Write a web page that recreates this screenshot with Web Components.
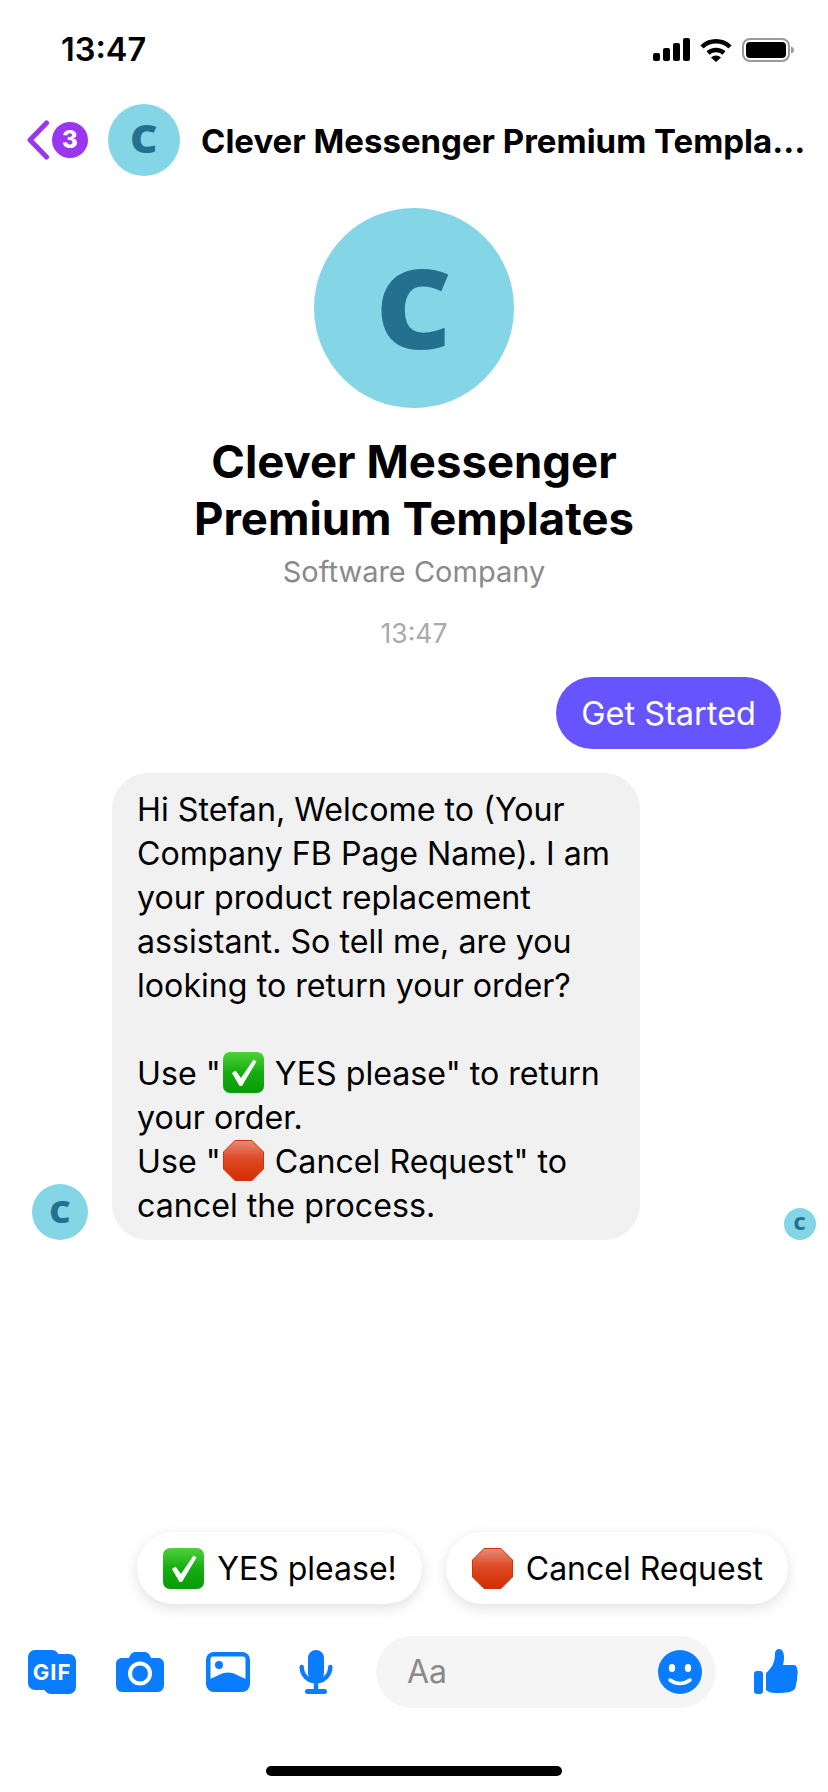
<!DOCTYPE html>
<html lang="en">
<head>
<meta charset="utf-8">
<title>Clever Messenger</title>
<style>
  html, body { margin: 0; background: #fff; }
  body { font-family: Inter, "Liberation Sans", sans-serif; color: #000; }
</style>
</head>
<body>
<chat-screen>
  <status-bar slot="status" time="13:47"></status-bar>
  <chat-header slot="header" badge="3">Clever Messenger Premium Templates</chat-header>
  <profile-intro slot="intro" category="Software Company" stamp="13:47">Clever Messenger<br>Premium Templates</profile-intro>
  <sent-bubble slot="thread">Get Started</sent-bubble>
  <received-bubble slot="thread">Hi Stefan, Welcome to (Your<br>Company FB Page Name). I am<br>your product replacement<br>assistant. So tell me, are you<br>looking to return your order?<br><br>Use "<emoji-icon kind="check"></emoji-icon> YES please" to return<br>your order.<br>Use "<emoji-icon kind="stop"></emoji-icon> Cancel Request" to<br>cancel the process.</received-bubble>
  <quick-chip slot="chips" kind="check">YES please!</quick-chip>
  <quick-chip slot="chips" kind="stop">Cancel Request</quick-chip>
  <composer-bar slot="composer"></composer-bar>
</chat-screen>

<script>
// Avatar azul con la C, el tamano llega por atributo
class CAvatar extends HTMLElement {
  connectedCallback() {
    const size = Number(this.getAttribute('size')) || 72;
    this.attachShadow({ mode: 'open' }).innerHTML = `
      <style>
        :host { display: flex; flex: none; width: ${size}px; height: ${size}px; border-radius: 50%;
          background: #84d5e5; color: #23708f; align-items: center; justify-content: center;
          font: 800 ${size * 0.55}px/1 "Open Sans", sans-serif; }
        span { display: block; margin-bottom: ${size * 0.025}px; transform: scaleX(1.07); }
      </style><span>C</span>`;
  }
}
customElements.define('c-avatar', CAvatar);

class EmojiIcon extends HTMLElement {
  connectedCallback() {
    const check = `
      <defs><linearGradient id="g" x1="0" y1="0" x2="0" y2="1">
        <stop offset="0" stop-color="#4fd03a"/><stop offset=".5" stop-color="#14ae0f"/><stop offset="1" stop-color="#0a9a08"/>
      </linearGradient></defs>
      <rect x="0" y="0" width="41" height="41" rx="7" fill="url(#g)"/>
      <path d="M9 21 L12.500 18.500 L18 26 L30.500 7.500 L33.500 9.500 L19 34 H16.500 Z" fill="#fff"/>`;
    const stop = `
      <defs><linearGradient id="g" x1="0" y1="0" x2="0" y2="1">
        <stop offset="0" stop-color="#e88a78"/><stop offset=".45" stop-color="#dd4a24"/><stop offset="1" stop-color="#d42c00"/>
      </linearGradient></defs>
      <path d="M12 .5 H29 L40.500 12 V29 L29 40.500 H12 L.5 29 V12 Z" fill="url(#g)" stroke="#d13208"/>`;
    this.attachShadow({ mode: 'open' }).innerHTML = `
      <style>
        :host { display: inline-block; width: 41px; height: 41px; margin: 0 2px; vertical-align: -8px; }
        svg { display: block; }
      </style>
      <svg width="41" height="41" viewBox="0 0 41 41">${this.getAttribute('kind') === 'stop' ? stop : check}</svg>`;
  }
}
customElements.define('emoji-icon', EmojiIcon);

class StatusBar extends HTMLElement {
  connectedCallback() {
    this.attachShadow({ mode: 'open' }).innerHTML = `
      <style>
        :host { display: flex; align-items: center; height: 100px; box-sizing: border-box;
          padding: 0 34px 0 61px; justify-content: space-between; }
        .time { font: 600 32.5px/36px Inter, sans-serif; margin-top: -1px; }
        .icons { display: flex; align-items: center; gap: 10px; }
        svg { display: block; }
      </style>
      <span class="time">${this.getAttribute('time')}</span>
      <span class="icons">
        <svg width="37" height="24" viewBox="0 0 37 24" fill="#000">
          <rect x="0" y="15" width="7" height="8" rx="2"/>
          <rect x="10" y="10" width="7" height="13" rx="2"/>
          <rect x="20" y="5" width="7" height="18" rx="2"/>
          <rect x="30" y="0" width="7" height="23" rx="2"/>
        </svg>
        <svg width="32" height="24" viewBox="0 0 32 24">
          <path d="M2 9 A20 20 0 0 1 30 9" fill="none" stroke="#000" stroke-width="4.500"/>
          <path d="M8 15 A12 12 0 0 1 24 15" fill="none" stroke="#000" stroke-width="4.500"/>
          <path d="M16 24 L11 19.500 A7.500 7.500 0 0 1 21 19.500 Z" fill="#000"/>
        </svg>
        <svg width="52" height="24" viewBox="0 0 52 24">
          <rect x="1" y="1" width="46" height="22" rx="7" fill="none" stroke="#9a9a9a" stroke-width="2"/>
          <rect x="4" y="4" width="40" height="16" rx="4" fill="#000"/>
          <path d="M49 8.500 C51 9 52 10.500 52 12 C52 13.500 51 15 49 15.500 Z" fill="#9a9a9a"/>
        </svg>
      </span>`;
  }
}
customElements.define('status-bar', StatusBar);

class ChatHeader extends HTMLElement {
  connectedCallback() {
    this.attachShadow({ mode: 'open' }).innerHTML = `
      <style>
        :host { display: flex; align-items: center; height: 80px; padding: 0 20px 0 27px; }
        svg { display: block; flex: none; }
        .badge { flex: none; width: 36px; height: 36px; margin: 0 20px 0 3px; border-radius: 50%;
          background: #9b36f0; color: #fff; display: flex; align-items: center; justify-content: center;
          font: 800 24px/1 Inter, sans-serif; }
        .title { flex: 1; min-width: 0; margin: 1px 0 0 21px; font: 700 33px/40px Inter, sans-serif;
          white-space: nowrap; overflow: hidden; text-overflow: ellipsis; }
      </style>
      <svg width="22" height="40" viewBox="0 0 22 40">
        <path d="M19.500 3 L3 20 L19.500 37" fill="none" stroke="#9b36f0" stroke-width="5" stroke-linecap="round" stroke-linejoin="round"/>
      </svg>
      <span class="badge">${this.getAttribute('badge')}</span>
      <c-avatar size="72"></c-avatar>
      <span class="title"><slot></slot></span>`;
  }
}
customElements.define('chat-header', ChatHeader);

class ProfileIntro extends HTMLElement {
  connectedCallback() {
    this.attachShadow({ mode: 'open' }).innerHTML = `
      <style>
        :host { display: flex; flex-direction: column; align-items: center; padding-top: 28px; text-align: center; }
        .name { margin-top: 25px; font: 700 45.500px/57px Inter, sans-serif; }
        .category { margin-top: 8px; font: 400 29px/34px Inter, sans-serif; color: #8a8a8e; }
        .stamp { margin-top: 29px; font: 400 26.500px/30px Inter, sans-serif; color: #a9a9ab; }
      </style>
      <c-avatar size="200"></c-avatar>
      <div class="name"><slot></slot></div>
      <div class="category">${this.getAttribute('category')}</div>
      <div class="stamp">${this.getAttribute('stamp')}</div>`;
  }
}
customElements.define('profile-intro', ProfileIntro);

class SentBubble extends HTMLElement {
  connectedCallback() {
    this.attachShadow({ mode: 'open' }).innerHTML = `
      <style>
        :host { display: flex; justify-content: flex-end; padding: 29px 47px 0 0; }
        .bubble { height: 72px; box-sizing: border-box; padding: 2px 25px 0; border-radius: 36px; background: #6655ff; color: #fff;
          display: flex; align-items: center; font: 400 32.500px/44px Inter, sans-serif; }
      </style>
      <div class="bubble"><slot></slot></div>`;
  }
}
customElements.define('sent-bubble', SentBubble);

class ReceivedBubble extends HTMLElement {
  connectedCallback() {
    this.attachShadow({ mode: 'open' }).innerHTML = `
      <style>
        :host { display: flex; align-items: flex-end; justify-content: space-between; padding: 24px 12px 0 32px; }
        .left { display: flex; align-items: flex-end; gap: 24px; }
        .bubble { width: 528px; box-sizing: border-box; padding: 15px 25px 12px; border-radius: 36px;
          background: #f1f1f1; font: 400 32.200px/44px Inter, sans-serif; white-space: nowrap; }
      </style>
      <div class="left">
        <c-avatar size="56"></c-avatar>
        <div class="bubble"><slot></slot></div>
      </div>
      <c-avatar size="32"></c-avatar>`;
  }
}
customElements.define('received-bubble', ReceivedBubble);

class QuickChip extends HTMLElement {
  connectedCallback() {
    this.attachShadow({ mode: 'open' }).innerHTML = `
      <style>
        :host { display: flex; align-items: center; gap: 13px; height: 72px; padding: 0 25px 0 26px; border-radius: 36px;
          background: #fff; box-shadow: 0 4px 14px rgba(0,0,0,.12); font: 400 32px/44px Inter, sans-serif; white-space: nowrap; }
        emoji-icon { margin: 0; }
        span { padding-top: 1px; }
      </style>
      <emoji-icon kind="${this.getAttribute('kind')}"></emoji-icon>
      <span><slot></slot></span>`;
  }
}
customElements.define('quick-chip', QuickChip);

class ComposerBar extends HTMLElement {
  connectedCallback() {
    this.attachShadow({ mode: 'open' }).innerHTML = `
      <style>
        :host { display: flex; align-items: center; height: 72px; padding-left: 28px; }
        svg { display: block; flex: none; fill: #0a7cff; }
        .cam { margin-left: 40px; } .pic { margin-left: 42px; } .mic { margin-left: 49px; }
        .thumb { margin-left: 38px; }
        .field { flex: none; width: 340px; height: 72px; margin-left: 43px; box-sizing: border-box; padding: 0 14px 0 31px;
          border-radius: 36px; background: #f5f5f5; display: flex; align-items: center; justify-content: space-between;
          font: 400 32px/44px Inter, sans-serif; color: #8a8a8a; }
      </style>
      <svg width="48" height="44" viewBox="0 0 48 44">
        <rect x="0" y="0" width="31" height="40" rx="7"/>
        <rect x="16" y="4" width="32" height="40" rx="7"/>
        <text x="24" y="30" text-anchor="middle" font-family="Inter, sans-serif" font-weight="700" font-size="22" letter-spacing="1" fill="#fff">GIF</text>
      </svg>
      <svg class="cam" width="48" height="40" viewBox="0 0 48 40">
        <path d="M6 6 H13 C14.500 2 16 0 20 0 H28 C32 0 33.500 2 35 6 H42 C45.500 6 48 8.500 48 12 V33 C48 37 45.500 40 42 40 H6 C2.500 40 0 37 0 33 V12 C0 8.500 2.500 6 6 6 Z"/>
        <circle cx="24" cy="21.500" r="10" fill="none" stroke="#fff" stroke-width="4"/>
      </svg>
      <svg class="pic" width="44" height="40" viewBox="0 0 44 40">
        <rect width="44" height="40" rx="8"/>
        <path d="M7 4.500 H37 Q39.500 4.500 39.500 7 V27 C33 24 28 20.500 22 20.500 C16 20.500 11 24 4.500 27 V7 Q4.500 4.500 7 4.500 Z" fill="#fff"/>
        <circle cx="13" cy="13" r="4"/>
      </svg>
      <svg class="mic" width="34" height="44" viewBox="0 0 34 44">
        <rect x="9" y="0" width="16" height="31" rx="8"/>
        <path d="M2.700 17 A14.300 14.300 0 0 0 31.300 17 M17 31 V40" stroke="#0a7cff" stroke-width="4.500" stroke-linecap="round" style="fill:none"/>
        <rect x="6" y="39" width="22" height="5" rx="2.500"/>
      </svg>
      <div class="field">
        <span>Aa</span>
        <svg width="44" height="44" viewBox="0 0 44 44">
          <circle cx="22" cy="22" r="22"/>
          <ellipse cx="14" cy="18" rx="3.200" ry="4" fill="#fff"/>
          <ellipse cx="30" cy="18" rx="3.200" ry="4" fill="#fff"/>
          <path d="M12 30 Q22 37 32 30" stroke="#fff" stroke-width="3.500" stroke-linecap="round" style="fill:none"/>
        </svg>
      </div>
      <svg class="thumb" width="44" height="46" viewBox="0 0 44 46">
        <rect x="0" y="22" width="9" height="23" rx="3"/>
        <path d="M12 24 C17 20 21 14 21 5 C21 1.500 23 0 25 0 C28 0 30 3 30 8 C30 11 29.500 14 29 16 L40 16 C42 16 43 18 43 20 C44 22 44 25 43 27 C43.500 30 43 33 42 35 C42 38 41 41 38 42 C34 44 26 44 21 44 C17 44 14 43 12 41 Z"/>
      </svg>`;
  }
}
customElements.define('composer-bar', ComposerBar);

// Pantalla completa: columnas por flujo, el hueco central lo absorbe el hilo
class ChatScreen extends HTMLElement {
  connectedCallback() {
    this.attachShadow({ mode: 'open' }).innerHTML = `
      <style>
        :host { display: flex; flex-direction: column; width: 828px; height: 1792px; overflow: hidden; background: #fff; }
        .thread { flex: 1; min-height: 0; }
        .chips { display: flex; justify-content: flex-end; gap: 24px; padding-right: 40px; }
        .composer { margin-top: 32px; }
        .home { flex: none; width: 296px; height: 10px; margin: 58px auto 16px; border-radius: 5px; background: #000; }
      </style>
      <slot name="status"></slot>
      <slot name="header"></slot>
      <slot name="intro"></slot>
      <div class="thread"><slot name="thread"></slot></div>
      <div class="chips"><slot name="chips"></slot></div>
      <div class="composer"><slot name="composer"></slot></div>
      <div class="home"></div>`;
  }
}
customElements.define('chat-screen', ChatScreen);
</script>
</body>
</html>
